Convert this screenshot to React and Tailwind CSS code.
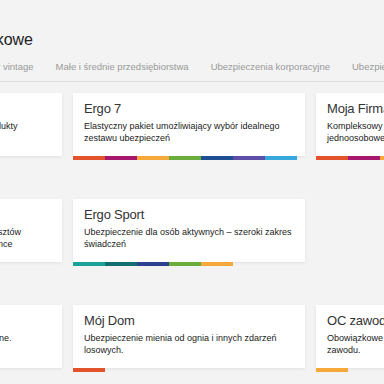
import React from 'react';

const TABS = ['Car vintage', 'Małe i średnie przedsiębiorstwa', 'Ubezpieczenia korporacyjne', 'Ubezpieczenia grupowe'];

const ROWS = [
  [
    { title: 'Pakiet Firma', desc: 'Ubezpieczenia dla firm oferujących produkty', bars: ['bg-[#e3522b]'] },
    {
      title: 'Ergo 7',
      desc: 'Elastyczny pakiet umożliwiający wybór idealnego zestawu ubezpieczeń',
      bars: ['bg-[#e3522b]', 'bg-[#a8176f]', 'bg-[#f6a83a]', 'bg-[#6aad3d]', 'bg-[#1f4f93]', 'bg-[#5d4fa7]', 'bg-[#37a8dc]'],
    },
    {
      title: 'Moja Firma',
      desc: 'Kompleksowy pakiet ubezpieczeń dla działalności jednoosobowej',
      bars: ['bg-[#e3522b]', 'bg-[#a8176f]', 'bg-[#f6a83a]'],
    },
  ],
  [
    { title: 'Podróże', desc: 'Zwrot nieprzewidzianych wydatków i kosztów leczenia za granicą oraz pomoc assistance', bars: ['bg-[#1a9d95]'] },
    {
      title: 'Ergo Sport',
      desc: 'Ubezpieczenie dla osób aktywnych – szeroki zakres świadczeń',
      bars: ['bg-[#1aa199]', 'bg-[#126f6f]', 'bg-[#2d4190]', 'bg-[#6aad3d]', 'bg-[#f6a83a]'],
    },
    null,
  ],
  [
    { title: 'Zwierzęta', desc: 'Zwierzęta domowe są zawsze bezpieczne.', bars: ['bg-[#6aad3d]'] },
    { title: 'Mój Dom', desc: 'Ubezpieczenie mienia od ognia i innych zdarzeń losowych.', bars: ['bg-[#e3522b]'] },
    { title: 'OC zawodowe', desc: 'Obowiązkowe ubezpieczenie OC dla Twojego zawodu.', bars: ['bg-[#f6a83a]'] },
  ],
];

function ProductCard({ title, desc, bars }) {
  return (
    <div className="w-[232px] shrink-0">
      <div className="h-[63px] bg-white px-[11px] pt-[6px] shadow-[0_1px_3px_rgba(0,0,0,0.08)]">
        <h3 className="text-[13px] leading-[20px] tracking-[-0.2px] text-[#333]">{title}</h3>
        <p className="mt-[1px] text-[9px] leading-[12px] text-[#1a1a1a]">{desc}</p>
      </div>
      <div className="flex h-[4px]">
        {bars.map((cls, i) => (
          <span key={i} className={`w-[32px] ${cls}`} />
        ))}
      </div>
    </div>
  );
}

export default function App() {
  return (
    <div className="w-[384px] h-[384px] overflow-hidden bg-[#f3f3f3] font-['Liberation_Sans',Arial,sans-serif]">
      <div className="pt-[29px] w-[403px] ml-[-370px] text-right">
        <h1 className="text-[16px] leading-[22px] text-[#222] whitespace-nowrap">Ubezpieczenia majątkowe</h1>
      </div>

      <div className="mt-[9px] border-b border-[#dcdcdc] pb-[7px]">
        <div className="flex gap-[22px] ml-[-15px] text-[9.5px] leading-[14px] text-[#999] whitespace-nowrap">
          {TABS.map((t) => (
            <span key={t}>{t}</span>
          ))}
        </div>
      </div>

      <div className="ml-[-170px] mt-[11px] flex flex-col gap-y-[39px]">
        {ROWS.map((row, r) => (
          <div key={r} className="flex gap-[11px]">
            {row.map((card, c) =>
              card ? <ProductCard key={c} {...card} /> : <div key={c} className="w-[232px] shrink-0" />
            )}
          </div>
        ))}
      </div>
    </div>
  );
}
